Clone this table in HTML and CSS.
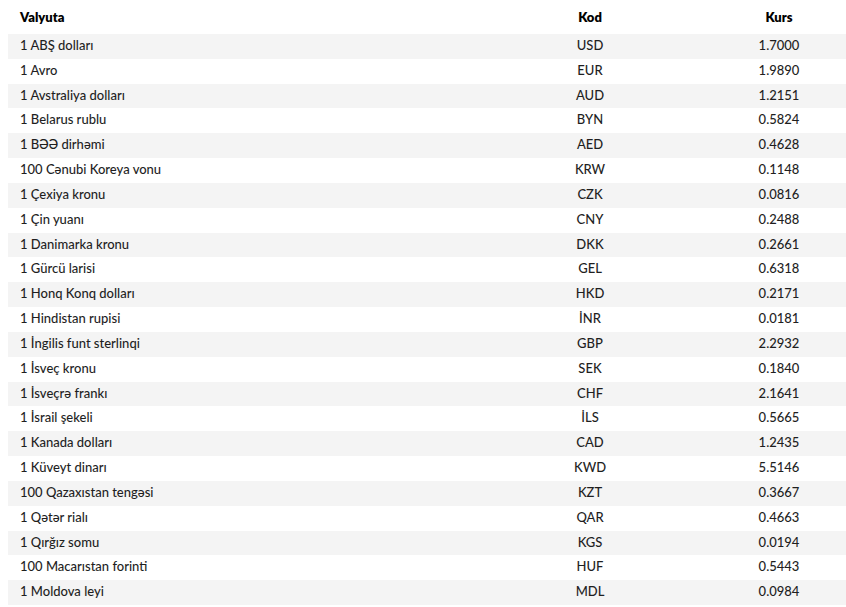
FILE: index.html
```html
<!DOCTYPE html>
<html lang="az">
<head>
<meta charset="utf-8">
<title>Valyuta məzənnələri</title>
<link rel="stylesheet" href="styles.css">
</head>
<body>
<table class="rates">
  <colgroup>
    <col class="c-name">
    <col class="c-code">
    <col class="c-rate">
  </colgroup>
  <thead>
    <tr><th class="name">Valyuta</th><th>Kod</th><th>Kurs</th></tr>
  </thead>
  <tbody>
    <tr><td class="name">1 ABŞ dolları</td><td>USD</td><td>1.7000</td></tr>
    <tr><td class="name">1 Avro</td><td>EUR</td><td>1.9890</td></tr>
    <tr><td class="name">1 Avstraliya dolları</td><td>AUD</td><td>1.2151</td></tr>
    <tr><td class="name">1 Belarus rublu</td><td>BYN</td><td>0.5824</td></tr>
    <tr><td class="name">1 BƏƏ dirhəmi</td><td>AED</td><td>0.4628</td></tr>
    <tr><td class="name">100 Cənubi Koreya vonu</td><td>KRW</td><td>0.1148</td></tr>
    <tr><td class="name">1 Çexiya kronu</td><td>CZK</td><td>0.0816</td></tr>
    <tr><td class="name">1 Çin yuanı</td><td>CNY</td><td>0.2488</td></tr>
    <tr><td class="name">1 Danimarka kronu</td><td>DKK</td><td>0.2661</td></tr>
    <tr><td class="name">1 Gürcü larisi</td><td>GEL</td><td>0.6318</td></tr>
    <tr><td class="name">1 Honq Konq dolları</td><td>HKD</td><td>0.2171</td></tr>
    <tr><td class="name">1 Hindistan rupisi</td><td>İNR</td><td>0.0181</td></tr>
    <tr><td class="name">1 İngilis funt sterlinqi</td><td>GBP</td><td>2.2932</td></tr>
    <tr><td class="name">1 İsveç kronu</td><td>SEK</td><td>0.1840</td></tr>
    <tr><td class="name">1 İsveçrə frankı</td><td>CHF</td><td>2.1641</td></tr>
    <tr><td class="name">1 İsrail şekeli</td><td>İLS</td><td>0.5665</td></tr>
    <tr><td class="name">1 Kanada dolları</td><td>CAD</td><td>1.2435</td></tr>
    <tr><td class="name">1 Küveyt dinarı</td><td>KWD</td><td>5.5146</td></tr>
    <tr><td class="name">100 Qazaxıstan tengəsi</td><td>KZT</td><td>0.3667</td></tr>
    <tr><td class="name">1 Qətər rialı</td><td>QAR</td><td>0.4663</td></tr>
    <tr><td class="name">1 Qırğız somu</td><td>KGS</td><td>0.0194</td></tr>
    <tr><td class="name">100 Macarıstan forinti</td><td>HUF</td><td>0.5443</td></tr>
    <tr><td class="name">1 Moldova leyi</td><td>MDL</td><td>0.0984</td></tr>
  </tbody>
</table>
</body>
</html>
```
FILE: styles.css
```css
html, body {
  background: #ffffff;
}
body {
  margin: 0 0 0 8px;
  font-family: Lato, "Noto Sans", sans-serif;
  font-size: 13px;
  font-weight: 500;
  color: #1f1f1f;
}
.rates {
  width: 100%;
  border-collapse: collapse;
  border-spacing: 0;
}
.c-name { width: 460px; }
.c-code { width: 244px; }
.c-rate { width: 134px; }
.rates th {
  padding: 9px 12px 9px;
  line-height: 16px;
  font-weight: 800;
  color: #000000;
  text-align: center;
  vertical-align: middle;
}
.rates td {
  padding: 4px 12px 5px;
  line-height: 15.83px;
  text-align: center;
  vertical-align: middle;
}
.rates .name {
  text-align: left;
}
.rates tbody tr:nth-child(odd) {
  background: #f4f4f4;
}
```
